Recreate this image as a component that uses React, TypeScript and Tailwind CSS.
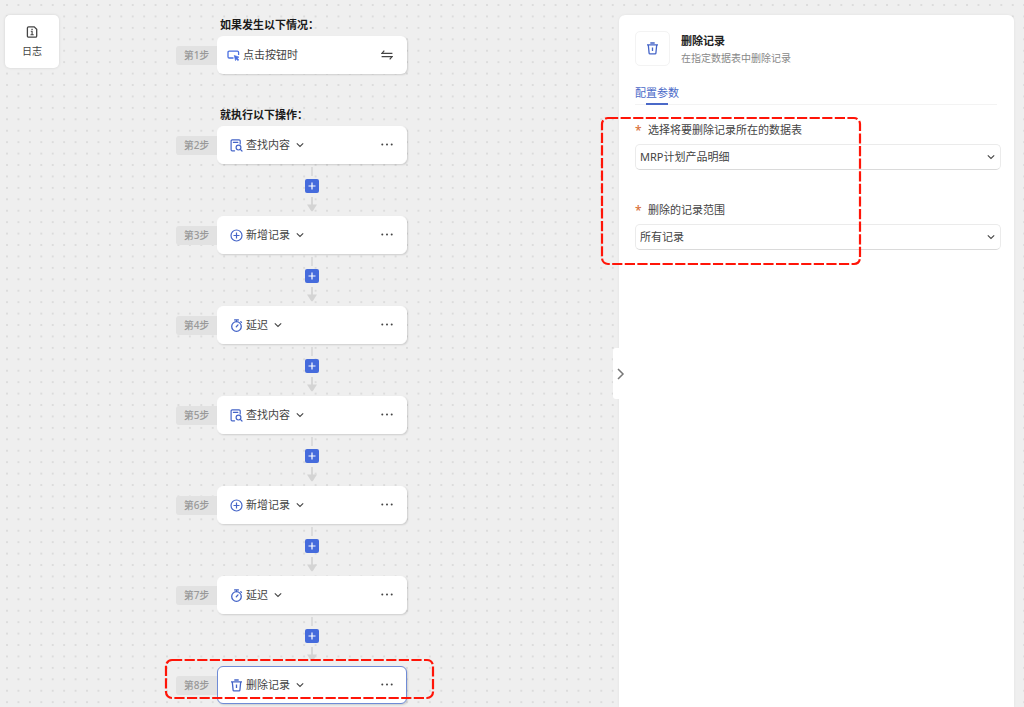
import type { ReactNode } from "react";

type IconProps = { className?: string };

type Step = {
    name: string,
    icon: (props: IconProps) => ReactNode,
    active?: boolean,
}

const ClickIcon = ({ className }: IconProps) => (
    <svg viewBox="0 0 13 13" fill="none" stroke="currentColor" strokeWidth="1.3" className={className}>
        <path d="M6.5 9H2.2A1.2 1.2 0 0 1 1 7.8V3.4a1.2 1.2 0 0 1 1.2-1.2h8.2a1.2 1.2 0 0 1 1.2 1.2V6" />
        <path d="M7.2 6.4l4.8 1.7-1.7 1 1.5 1.7-.9.9-1.6-1.6-.8 1.5z" fill="currentColor" strokeWidth=".6" />
    </svg>
)

const SearchIcon = ({ className }: IconProps) => (
    <svg viewBox="0 0 13 13" fill="none" stroke="currentColor" strokeWidth="1.2" className={className}>
        <path d="M4.6 11.8H2.200a1.100 1.100 0 0 1-1.100-1.100V2A1.100 1.100 0 0 1 2.200.9h6.900A1.100 1.100 0 0 1 10.200 2v3M3.400 3.400h4.400" strokeLinecap="round" />
        <circle cx="8.500" cy="8.600" r="2.400" />
        <path d="M10.300 10.300l1.700 1.700" strokeLinecap="round" />
    </svg>
)

const AddIcon = ({ className }: IconProps) => (
    <svg viewBox="0 0 13 13" fill="none" stroke="currentColor" strokeWidth="1.2" className={className}>
        <circle cx="6.5" cy="6.5" r="5.500" />
        <path d="M6.5 3.500v6M3.500 6.5h6" />
    </svg>
)

const TimerIcon = ({ className }: IconProps) => (
    <svg viewBox="0 0 13 13" fill="none" stroke="currentColor" strokeWidth="1.3" className={className}>
        <circle cx="6.5" cy="7.500" r="4.800" />
        <path d="M4.600 .9h3.800M6.500 1v1.500M10.800 2.700l.7.7M6.300 7.700l1.700-1.800" strokeLinecap="round" />
    </svg>
)

const TrashIcon = ({ className }: IconProps) => (
    <svg viewBox="0 0 13 13" fill="none" stroke="currentColor" strokeWidth="1.3" className={className}>
        <path d="M1 2.800h11M4.300 1h4.400M2.300 3l.8 8.100a.9.9 0 0 0 .9.8h5a.9.9 0 0 0 .9-.8l.8-8.100M6.500 5.400v3.600" />
    </svg>
)

const LogIcon = ({ className }: IconProps) => (
    <svg viewBox="0 0 12 12" fill="none" stroke="currentColor" strokeWidth="1.3" className={className}>
        <path d="M2.600.8h5.600l2.500 2.500v6.700a1.200 1.200 0 0 1-1.200 1.200H2.600a1.200 1.200 0 0 1-1.200-1.200V2A1.200 1.200 0 0 1 2.600.8z" />
        <path d="M4.800 5.300h1.300v3.200M4.500 8.700h3.200M5.400 3.400h1.300" strokeWidth="1.100" />
    </svg>
)

const SwapIcon = ({ className }: IconProps) => (
    <svg viewBox="0 0 12 12" fill="none" stroke="currentColor" strokeWidth="1.200" className={className}>
        <path d="M3.300 1.600L.9 4.300h10.500M8.700 10.400l2.400-2.700H.6" />
    </svg>
)

const ChevronDown = ({ className }: IconProps) => (
    <svg viewBox="0 0 8 8" fill="none" stroke="currentColor" strokeWidth="1.100" className={className}>
        <path d="M.8 2.300L4 5.500l3.200-3.200" />
    </svg>
)

const DotsIcon = ({ className }: IconProps) => (
    <svg viewBox="0 0 12 12" fill="currentColor" className={className}>
        <circle cx="1.300" cy="5.500" r="1" />
        <circle cx="6" cy="5.500" r="1" />
        <circle cx="10.700" cy="5.500" r="1" />
    </svg>
)

const steps: Step[] = [
    { name: '查找内容', icon: SearchIcon },
    { name: '新增记录', icon: AddIcon },
    { name: '延迟', icon: TimerIcon },
    { name: '查找内容', icon: SearchIcon },
    { name: '新增记录', icon: AddIcon },
    { name: '延迟', icon: TimerIcon },
    { name: '删除记录', icon: TrashIcon, active: true },
]

const fields = [
    { id: 'table', label: '选择将要删除记录所在的数据表', value: 'MRP计划产品明细' },
    { id: 'range', label: '删除的记录范围', value: '所有记录' },
]

function DotGrid() {
    return (
        <svg className="absolute inset-0 -z-10 h-full w-full" aria-hidden="true">
            <defs>
                <pattern id="dots" width="16" height="16" patternUnits="userSpaceOnUse" patternTransform="translate(1.300 -.7) scale(.7143)">
                    <circle cx="8" cy="8" r="1.200" fill="#d2d2d2" />
                </pattern>
            </defs>
            <rect width="100%" height="100%" fill="url(#dots)" />
        </svg>
    )
}

function Highlight({ className }: { className: string }) {
    return (
        <div className={`pointer-events-none absolute z-10 ${className}`}>
            <svg className="block h-full w-full overflow-visible" aria-hidden="true">
                <rect width="100%" height="100%" rx="6" fill="none" stroke="#ff1508" strokeWidth="2.200" strokeDasharray="10.200 2.400" />
            </svg>
        </div>
    )
}

function StepLabel({ index }: { index: number }) {
    return (
        <span className="flex h-[19px] w-[41px] items-center justify-center rounded-l-[3px] bg-[#e2e2e2] text-[10px] font-medium text-[#999]">
            第{index}步
        </span>
    )
}

function Connector() {
    return (
        <div className="ml-[41px] flex h-[52px] flex-col items-center gap-[3px] pt-[3px] text-[#d4d4d4]">
            <svg viewBox="0 0 12 9" className="h-[9px] w-3 shrink-0"><path d="M6 0v9" stroke="currentColor" strokeWidth="1.400" /></svg>
            <button type="button" aria-label="添加步骤" className="flex size-[14px] shrink-0 items-center justify-center rounded-[2px] bg-[#456bdc] text-white">
                <svg viewBox="0 0 8 8" className="size-2"><path d="M4 .5v7M.5 4h7" stroke="currentColor" strokeWidth="1.200" /></svg>
            </button>
            <svg viewBox="0 0 12 16" className="h-4 w-3 shrink-0">
                <path d="M6 1v9" stroke="currentColor" strokeWidth="1.800" />
                <path d="M1 8.500h10l-4 6.200q-1 1.200-2 0z" fill="currentColor" />
            </svg>
        </div>
    )
}

function StepRow({ step, index }: { step: Step, index: number }) {
    const Icon = step.icon
    return (
        <div className="relative flex items-center">
            <StepLabel index={index} />
            <div className={`flex h-[38px] w-[190px] items-center rounded-md border bg-white pl-3 pr-[13px] shadow-[1px_1px_2px_rgba(0,0,0,0.14)] ${step.active ? 'border-[#6f8bd6]' : 'border-white'}`}>
                <button type="button" className="flex items-center">
                    <Icon className="mr-[3px] size-[13px] text-[#4464c8]" />
                    {step.name}
                    <ChevronDown className="ml-[6px] size-2" />
                </button>
                <button type="button" aria-label="更多" className="ml-auto"><DotsIcon className="size-3" /></button>
            </div>
            {step.active && <Highlight className="-top-[6px] -right-[26px] bottom-[6px] -left-[10px]" />}
        </div>
    )
}

function Flow() {
    return (
        <div className="text-[11px] leading-[18px]">
            <h2 className="mb-[2px] ml-11 font-bold text-[#1a1a1a]">如果发生以下情况：</h2>
            <div className="flex items-center">
                <StepLabel index={1} />
                <div className="flex h-[38px] w-[190px] items-center rounded-md bg-white pl-[10px] pr-[14px] shadow-[1px_1px_2px_rgba(0,0,0,0.14)]">
                    <ClickIcon className="mr-[3px] size-[13px] text-[#4a6fe0]" />
                    点击按钮时
                    <button type="button" aria-label="切换" className="ml-auto"><SwapIcon className="size-3" /></button>
                </div>
            </div>
            <h2 className="mb-[2px] ml-11 mt-8 font-bold text-[#1a1a1a]">就执行以下操作：</h2>
            {steps.map((step, index) => (
                <div key={index}>
                    {index > 0 && <Connector />}
                    <StepRow step={step} index={index + 2} />
                </div>
            ))}
        </div>
    )
}

function Panel() {
    return (
        <aside className="relative mt-[15px] mr-[10px] w-[395px] shrink-0 rounded-t-md bg-white pt-4 pr-[13px] pl-4 shadow-[0_0_3px_rgba(0,0,0,0.06)]">
            <button type="button" aria-label="收起" className="absolute top-[333px] -left-[6px] flex h-[51px] w-3 items-center justify-end rounded-l-[3px] bg-white text-[#777]">
                <svg viewBox="0 0 8 12" fill="none" stroke="currentColor" strokeWidth="1.500" className="h-3 w-2"><path d="M1 1l5 5-5 5" /></svg>
            </button>
            <div className="flex gap-[11px]">
                <div className="flex size-[35px] items-center justify-center rounded-[5px] border border-[#f3f3f3]">
                    <TrashIcon className="size-[13px] text-[#4464c8]" />
                </div>
                <div className="pt-px">
                    <h1 className="text-[11px] leading-[18px] font-bold text-[#222]">删除记录</h1>
                    <p className="text-[10px] leading-[17px] text-[#888]">在指定数据表中删除记录</p>
                </div>
            </div>
            <div className="mt-[17px] mr-1 flex border-b border-[#f3f3f3]">
                <button type="button" className="-mb-px flex flex-col items-center text-[11px] leading-[18px] text-[#4a69c8]">
                    配置参数
                    <span className="mt-[1px] h-[2px] w-[22px] bg-[#4a69c8]" />
                </button>
            </div>
            <form className="relative mt-4 flex flex-col gap-[31px]">
                {fields.map((field) => (
                    <div key={field.id} className="flex flex-col gap-[5px]">
                        <label htmlFor={field.id} className="flex h-[18px] items-center text-[11px] leading-[18px]">
                            <span className="w-[13px] pt-[2px] text-[12px] leading-[14px] font-medium text-[#d9703a]">*</span>
                            {field.label}
                        </label>
                        <div className="relative">
                            <select id={field.id} className="block h-[26px] w-full appearance-none rounded-[5px] border border-[#ebebeb] border-b-[#dadada] bg-white pr-6 pl-1 text-[11px]">
                                <option>{field.value}</option>
                            </select>
                            <ChevronDown className="pointer-events-none absolute top-[9px] right-[6px] size-2" />
                        </div>
                    </div>
                ))}
                <Highlight className="-top-[3px] -left-[33px] h-[146px] w-[258px]" />
            </form>
        </aside>
    )
}

export default function App() {
    return (
        <div className="relative isolate flex min-h-screen overflow-hidden bg-[#efefef] font-['Noto_Sans','Noto_Sans_CJK_SC',sans-serif] text-[#444]">
            <DotGrid />
            <main className="flex flex-1 items-start gap-[117px] pt-4 pl-[5px]">
                <button type="button" className="-mt-px flex h-[53px] w-[54px] shrink-0 flex-col items-center justify-center gap-1 rounded-[5px] bg-white pt-[2px] text-[10px] leading-[18px] shadow-[0_0_3px_rgba(0,0,0,0.12)]">
                    <LogIcon className="size-3" />
                    日志
                </button>
                <Flow />
            </main>
            <Panel />
        </div>
    )
}
